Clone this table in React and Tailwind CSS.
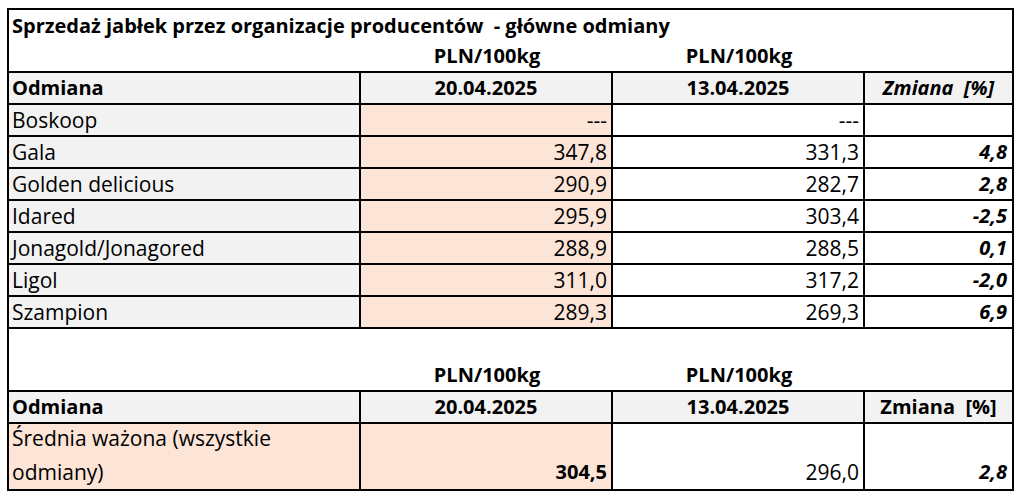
import React from "react";

const rows = [
  ["Boskoop", "---", "---", ""],
  ["Gala", "347,8", "331,3", "4,8"],
  ["Golden delicious", "290,9", "282,7", "2,8"],
  ["Idared", "295,9", "303,4", "-2,5"],
  ["Jonagold/Jonagored", "288,9", "288,5", "0,1"],
  ["Ligol", "311,0", "317,2", "-2,0"],
  ["Szampion", "289,3", "269,3", "6,9"],
];

const grid = "grid grid-cols-[352px_252px_252px_1fr]";
const cell = "flex items-end leading-[26px] pb-[2px] whitespace-pre";
const reg = "text-[21px]";

function Header({ italic }) {
  return (
    <div className={`${grid} h-[32px] border-t-2 border-black bg-[#f2f2f2] font-bold`}>
      <div className={`${cell} border-r-2 border-black pl-[3px]`}>Odmiana</div>
      <div className={`${cell} border-r-2 border-black justify-center`}>20.04.2025</div>
      <div className={`${cell} border-r-2 border-black justify-center`}>13.04.2025</div>
      <div className={`${cell} justify-center ${italic ? "italic" : ""}`}>{"Zmiana  [%]"}</div>
    </div>
  );
}

function PlnRow({ h }) {
  return (
    <div className={`${grid} ${h} font-bold`}>
      <div />
      <div className={`${cell} justify-center`}>PLN/100kg</div>
      <div className={`${cell} justify-center`}>PLN/100kg</div>
      <div />
    </div>
  );
}

export default function App() {
  return (
    <div className="bg-white w-[1023px] h-[498px] pt-[8px] pl-[7px] text-black text-[20px] font-['Open_Sans',sans-serif]">
      <div className="w-[1007px] border-2 border-black">
        <div className={`h-[31px] ${cell} pl-[3px] font-bold`}>
          {"Sprzedaż jabłek przez organizacje producentów  - główne odmiany"}
        </div>
        <PlnRow h="h-[30px]" />
        <Header italic />
        {rows.map((r) => (
          <div key={r[0]} className={`${grid} h-[32px] border-t-2 border-black`}>
            <div className={`${cell} ${reg} border-r-2 border-black bg-[#f2f2f2] pl-[3px]`}>{r[0]}</div>
            <div className={`${cell} ${reg} border-r-2 border-black bg-[#fce4d6] justify-end pr-[4px]`}>{r[1]}</div>
            <div className={`${cell} ${reg} border-r-2 border-black justify-end pr-[4px]`}>{r[2]}</div>
            <div className={`${cell} justify-end pr-[5px] font-bold italic`}>{r[3]}</div>
          </div>
        ))}
        <div className="h-[32px] border-t-2 border-black" />
        <PlnRow h="h-[31px]" />
        <Header />
        <div className={`${grid} h-[67px] border-t-2 border-black`}>
          <div className={`border-r-2 border-black bg-[#fce4d6] pl-[3px] leading-[34px] ${reg}`}>
            <div className="-mt-[3px]">
              Średnia ważona (wszystkie
              <br />
              odmiany)
            </div>
          </div>
          <div className={`${cell} pb-[4px] border-r-2 border-black bg-[#fce4d6] justify-end pr-[4px] font-bold`}>304,5</div>
          <div className={`${cell} ${reg} pb-[4px] border-r-2 border-black justify-end pr-[4px]`}>296,0</div>
          <div className={`${cell} pb-[4px] justify-end pr-[5px] font-bold italic`}>2,8</div>
        </div>
      </div>
    </div>
  );
}
